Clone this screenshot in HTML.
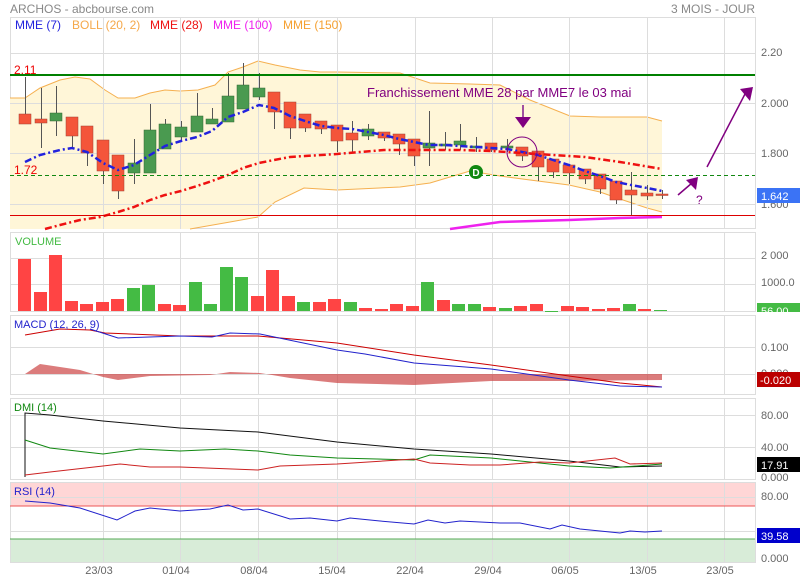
<!DOCTYPE html><html><head><meta charset="utf-8"><style>body{margin:0;background:#fff}svg{display:block;font-family:"Liberation Sans",sans-serif}</style></head><body>
<svg width="800" height="580" viewBox="0 0 800 580">
<rect width="800" height="580" fill="#fff"/>
<!-- panel frames -->
<g fill="none" stroke="#ddd">
<rect x="10.5" y="17.5" width="745" height="211"/>
<rect x="10.5" y="232.5" width="745" height="79"/>
<rect x="10.5" y="315.5" width="745" height="79"/>
<rect x="10.5" y="398.5" width="745" height="81"/>
</g>
<!-- RSI backgrounds -->
<rect x="10" y="482" width="745" height="24" fill="#ffd6d6"/>
<rect x="10" y="539" width="745" height="23" fill="#d8ecd8"/>
<rect x="10.5" y="482.5" width="745" height="80" fill="none" stroke="#ddd"/>
<!-- bollinger fill -->
<path d="M10,98 L25,98 40,88 60,80 75,77 90,79 105,90 118,98 135,98 150,93 165,90 180,91 198,90 215,85 228,72 243,67 258,61 275,65 300,70 320,72 337,72 400,73 430,83 470,84 500,85 530,100 570,116 600,117 647,117 662,121 L662,212 647,208 620,199 600,192 569,185 530,180 500,176 470,171 430,183 400,187 337,190 304,188 275,202 258,217 230,222 190,229 10,229Z" fill="#fff6d8"/>
<path d="M10,98 L25,98 40,88 60,80 75,77 90,79 105,90 118,98 135,98 150,93 165,90 180,91 198,90 215,85 228,72 243,67 258,61 275,65 300,70 320,72 337,72 400,73 430,83 470,84 500,85 530,100 570,116 600,117 647,117 662,121" fill="none" stroke="#f5b050" stroke-width="1"/>
<path d="M662,212 647,208 620,199 600,192 569,185 530,180 500,176 470,171 430,183 400,187 337,190 304,188 275,202 258,217 230,222 190,229" fill="none" stroke="#f5b050" stroke-width="1"/>
<!-- grid -->
<g stroke="#ddd" stroke-width="1">
<path d="M103.5,17V229M180.5,17V229M258.5,17V229M337.5,17V229M415.5,17V229M492.5,17V229M569.5,17V229M647.5,17V229M724.5,17V229"/>
<path d="M10,53.5H755M10,103.5H755M10,153.5H755M10,204.5H755"/>
<path d="M103.5,232V311M180.5,232V311M258.5,232V311M337.5,232V311M415.5,232V311M492.5,232V311M569.5,232V311M647.5,232V311M724.5,232V311M10,258.5H755M10,284.5H755"/>
<path d="M103.5,315V394M180.5,315V394M258.5,315V394M337.5,315V394M415.5,315V394M492.5,315V394M569.5,315V394M647.5,315V394M724.5,315V394M10,347.5H755M10,374.5H755"/>
<path d="M103.5,398V479M180.5,398V479M258.5,398V479M337.5,398V479M415.5,398V479M492.5,398V479M569.5,398V479M647.5,398V479M724.5,398V479M10,415.5H755M10,447.5H755"/>
<path d="M103.5,482V562M180.5,482V562M258.5,482V562M337.5,482V562M415.5,482V562M492.5,482V562M569.5,482V562M647.5,482V562M724.5,482V562M10,497.5H755M10,531.5H755"/>
</g>
<!-- candles wicks -->
<g stroke="#555" stroke-width="1">
<path d="M25.5,77V124M41.5,88V148M56.5,86V136M72.5,117V148M87.5,126V166M103.5,140V184M118.5,155V199M134.5,139V184M150.5,104V173M165.5,119V149M181.5,121V140M197.5,93V132M212.5,108V124M228.5,73V122M243.5,63V109M259.5,73V100M274.5,92V129M290.5,102V139M305.5,114V132M321.5,121V134M337.5,125V152M352.5,121V152M368.5,124V140M384.5,132V141M399.5,134V155M414.5,139V166M429.5,111V166M445.5,132V150M460.5,124V150M476.5,137V152M491.5,143V152M507.5,139V152M522.5,147V161M538.5,151V181M553.5,159V178M569.5,165V184M585.5,169V184M600.5,174V194M616.5,181V204M631.5,172V215M647.5,185V200M662.5,190V199"/>
</g>
<g fill="#f4553a" stroke="#a04030" stroke-width="0.5">
<rect x="19" y="114" width="12" height="10"/><rect x="35" y="119" width="12" height="4"/><rect x="66" y="117" width="12" height="19"/><rect x="81" y="126" width="12" height="27"/><rect x="97" y="140" width="12" height="31"/><rect x="112" y="155" width="12" height="36"/><rect x="268" y="92" width="12" height="20"/><rect x="284" y="102" width="12" height="26"/><rect x="299" y="114" width="12" height="14"/><rect x="315" y="121" width="12" height="8"/><rect x="331" y="125" width="12" height="16"/><rect x="346" y="133" width="12" height="7"/><rect x="378" y="132" width="12" height="6"/><rect x="393" y="134" width="12" height="10"/><rect x="408" y="139" width="12" height="17"/><rect x="485" y="143" width="12" height="7"/><rect x="516" y="147" width="12" height="9"/><rect x="532" y="151" width="12" height="16"/><rect x="547" y="159" width="12" height="13"/><rect x="563" y="165" width="12" height="8"/><rect x="579" y="169" width="12" height="10"/><rect x="594" y="174" width="12" height="15"/><rect x="610" y="181" width="12" height="19"/><rect x="625" y="190" width="12" height="5"/><rect x="641" y="193" width="12" height="3"/><rect x="656" y="194" width="12" height="1.5"/>
</g>
<g fill="#4a9a50" stroke="#336633" stroke-width="0.5">
<rect x="50" y="113" width="12" height="8"/><rect x="128" y="163" width="12" height="10"/><rect x="144" y="130" width="12" height="43"/><rect x="159" y="124" width="12" height="25"/><rect x="175" y="127" width="12" height="10"/><rect x="191" y="116" width="12" height="16"/><rect x="206" y="119" width="12" height="5"/><rect x="222" y="96" width="12" height="26"/><rect x="237" y="85" width="12" height="24"/><rect x="253" y="88" width="12" height="9"/><rect x="362" y="129" width="12" height="7"/><rect x="423" y="143" width="12" height="5"/><rect x="454" y="141" width="12" height="4"/><rect x="439" y="144" width="12" height="2"/><rect x="470" y="146" width="12" height="2"/><rect x="501" y="146" width="12" height="2"/>
</g>
<!-- moving averages -->
<polyline fill="none" stroke="#2222dd" stroke-width="2.5" stroke-dasharray="7,3,2,3" points="25,162 40,155 60,150 72,148 87,152 103,163 118,170 134,165 150,155 165,146 181,141 197,137 212,131 228,117 243,112 259,105 274,108 290,116 305,121 321,126 337,128 352,129 368,132 384,135 399,139 414,142 429,145 445,145 460,146 476,147 491,148 507,149 522,152 538,155 553,160 569,165 585,171 600,176 616,182 631,185 647,188 662,191"/>
<polyline fill="none" stroke="#ee1111" stroke-width="2.5" stroke-dasharray="7,3,2,3" points="45,229 60,225 80,220 100,217 118,212 134,207 150,200 165,195 181,191 197,186 212,181 228,175 243,168 259,163 274,160 290,157 305,156 321,155 337,154 360,152 384,150 414,150 460,150 491,151 522,153 553,155 585,157 620,162 662,169"/>
<polyline fill="none" stroke="#ee22ee" stroke-width="2.5" points="450,229 500,222 569,220 620,218 662,217"/>
<!-- annotations -->
<line x1="10" y1="75" x2="755" y2="75" stroke="#008000" stroke-width="2"/>
<line x1="10" y1="175.5" x2="755" y2="175.5" stroke="#118811" stroke-dasharray="4,3"/>
<line x1="10" y1="215.5" x2="755" y2="215.5" stroke="#dd0000"/>
<text x="14" y="74" font-size="12" fill="#e00">2.11</text>
<text x="14" y="174" font-size="12" fill="#e00">1.72</text>
<text x="367" y="97" font-size="13" fill="#800080">Franchissement MME 28 par MME7 le 03 mai</text>
<line x1="523" y1="105" x2="523" y2="120" stroke="#a050a0" stroke-width="2"/>
<path d="M515,117 L531,117 523,128Z" fill="#800080"/>
<circle cx="522" cy="152" r="15" fill="none" stroke="#800080" stroke-width="1"/>
<line x1="707" y1="167" x2="745" y2="94" stroke="#800080" stroke-width="1.5"/>
<path d="M740,89 L753,87 750,101Z" fill="#800080"/>
<line x1="678" y1="195" x2="692" y2="183" stroke="#800080" stroke-width="1.5"/>
<path d="M686,180 L698,177 696,190Z" fill="#800080"/>
<text x="696" y="204" font-size="12" fill="#800080">?</text>
<circle cx="476" cy="172" r="7" fill="#118811"/>
<text x="476" y="176" font-size="10" font-weight="bold" fill="#fff" text-anchor="middle">D</text>
<!-- titles -->
<text x="10" y="13" font-size="12" fill="#888">ARCHOS - abcbourse.com</text>
<text x="755" y="13" font-size="12" fill="#888" text-anchor="end">3 MOIS - JOUR</text>
<g font-size="12">
<text x="15" y="29" fill="#2222dd">MME (7)</text>
<text x="72" y="29" fill="#f5a84a">BOLL (20, 2)</text>
<text x="150" y="29" fill="#ee1111">MME (28)</text>
<text x="213" y="29" fill="#ee22ee">MME (100)</text>
<text x="283" y="29" fill="#f5a030">MME (150)</text>
</g>
<!-- volume -->
<g fill="#ff4444">
<rect x="18" y="259" width="13" height="52"/><rect x="34" y="292" width="13" height="19"/><rect x="49" y="255" width="13" height="56"/><rect x="65" y="301" width="13" height="10"/><rect x="80" y="304" width="13" height="7"/><rect x="96" y="302" width="13" height="9"/><rect x="111" y="299" width="13" height="12"/><rect x="158" y="304" width="13" height="7"/><rect x="173" y="305" width="13" height="6"/><rect x="251" y="296" width="13" height="15"/><rect x="266" y="270" width="13" height="41"/><rect x="282" y="296" width="13" height="15"/><rect x="313" y="302" width="13" height="9"/><rect x="328" y="299" width="13" height="12"/><rect x="359" y="308" width="13" height="3"/><rect x="375" y="309" width="13" height="2"/><rect x="390" y="304" width="13" height="7"/><rect x="406" y="306" width="13" height="5"/><rect x="437" y="300" width="13" height="11"/><rect x="483" y="307" width="13" height="4"/><rect x="514" y="306" width="13" height="5"/><rect x="530" y="304" width="13" height="7"/><rect x="561" y="306" width="13" height="5"/><rect x="576" y="307" width="13" height="4"/><rect x="592" y="309" width="13" height="2"/><rect x="607" y="308" width="13" height="3"/><rect x="638" y="309" width="13" height="2"/>
</g>
<g fill="#44bb44">
<rect x="127" y="288" width="13" height="23"/><rect x="142" y="285" width="13" height="26"/><rect x="189" y="282" width="13" height="29"/><rect x="204" y="304" width="13" height="7"/><rect x="220" y="267" width="13" height="44"/><rect x="235" y="277" width="13" height="34"/><rect x="297" y="302" width="13" height="9"/><rect x="344" y="302" width="13" height="9"/><rect x="421" y="282" width="13" height="29"/><rect x="452" y="304" width="13" height="7"/><rect x="468" y="304" width="13" height="7"/><rect x="499" y="308" width="13" height="3"/><rect x="545" y="311" width="13" height="1"/><rect x="623" y="304" width="13" height="7"/><rect x="654" y="310" width="13" height="1"/>
</g>
<text x="15" y="245" font-size="11" fill="#44bb44">VOLUME</text>
<!-- MACD -->
<path d="M25,374 L40,364 80,370 103,377 118,380 150,376 210,375 230,372 260,373 290,378 337,383 414,385 491,381 569,381 662,380 662,374Z" fill="#cc4444" fill-opacity="0.7"/>
<polyline fill="none" stroke="#cc0000" stroke-width="1" points="25,335 60,329 90,330 105,333 180,336 258,336 337,343 414,355 491,365 569,376 620,383 662,387"/>
<polyline fill="none" stroke="#2222cc" stroke-width="1" points="90,329 118,338 180,336 212,337 230,333 260,334 337,350 365,354 414,363 491,369 569,380 620,386 662,387"/>
<text x="14" y="328" font-size="11" fill="#2222cc">MACD (12, 26, 9)</text>
<!-- DMI -->
<polyline fill="none" stroke="#111" stroke-width="1" points="25,477 25,413 50,415 103,421 180,428 258,432 337,442 414,449 491,454 569,461 620,467 662,466"/>
<polyline fill="none" stroke="#118811" stroke-width="1" points="25,440 50,448 103,454 140,449 180,451 225,449 258,451 290,455 337,458 414,460 430,455 491,458 569,466 610,468 662,464"/>
<polyline fill="none" stroke="#cc2222" stroke-width="1" points="25,475 50,472 103,466 120,464 150,467 180,467 258,470 280,466 337,464 414,459 430,463 470,465 500,465 540,462 569,463 615,458 630,464 662,463"/>
<text x="14" y="411" font-size="11" fill="#118811">DMI (14)</text>
<!-- RSI -->
<line x1="10" y1="506" x2="755" y2="506" stroke="#ee5555"/>
<line x1="10" y1="539" x2="755" y2="539" stroke="#55aa55"/>
<polyline fill="none" stroke="#2222cc" stroke-width="1" points="25,501 50,503 80,508 117,520 135,511 150,508 180,511 210,509 228,505 243,510 258,509 290,519 310,518 337,521 350,518 380,521 414,524 428,520 445,523 460,521 480,522 500,523 520,523 550,529 562,525 580,529 620,533 630,531 645,532 662,531"/>
<text x="14" y="495" font-size="11" fill="#2222cc">RSI (14)</text>
<!-- right axis -->
<g font-size="11" fill="#666">
<text x="761" y="56">2.20</text><text x="761" y="107">2.000</text><text x="761" y="157">1.800</text><text x="761" y="208">1.600</text>
<text x="761" y="259">2 000</text><text x="761" y="286">1000.0</text>
<text x="761" y="351">0.100</text><text x="761" y="377">0.000</text>
<text x="761" y="419">80.00</text><text x="761" y="451">40.00</text><text x="761" y="481">0.000</text>
<text x="761" y="500">80.00</text><text x="761" y="562">0.000</text>
</g>
<rect x="757" y="188" width="43" height="15" fill="#3b73f5"/><text x="761" y="200" font-size="11" fill="#fff">1.642</text>
<rect x="757" y="303" width="43" height="9" fill="#44bb44"/><text x="761" y="315" font-size="11" fill="#fff">56.00</text>
<rect x="757" y="372" width="43" height="15" fill="#bb0000"/><text x="760" y="384" font-size="11" fill="#fff">-0.020</text>
<rect x="757" y="457" width="43" height="15" fill="#000"/><text x="761" y="469" font-size="11" fill="#fff">17.91</text>
<rect x="757" y="528" width="43" height="15" fill="#0000cc"/><text x="761" y="540" font-size="11" fill="#fff">39.58</text>
<rect x="0" y="312" width="800" height="2" fill="#fff"/>
<g font-size="11" fill="#666" text-anchor="middle">
<text x="99" y="574">23/03</text><text x="176" y="574">01/04</text><text x="254" y="574">08/04</text><text x="332" y="574">15/04</text><text x="410" y="574">22/04</text><text x="488" y="574">29/04</text><text x="565" y="574">06/05</text><text x="643" y="574">13/05</text><text x="720" y="574">23/05</text>
</g>
</svg>
</body></html>
